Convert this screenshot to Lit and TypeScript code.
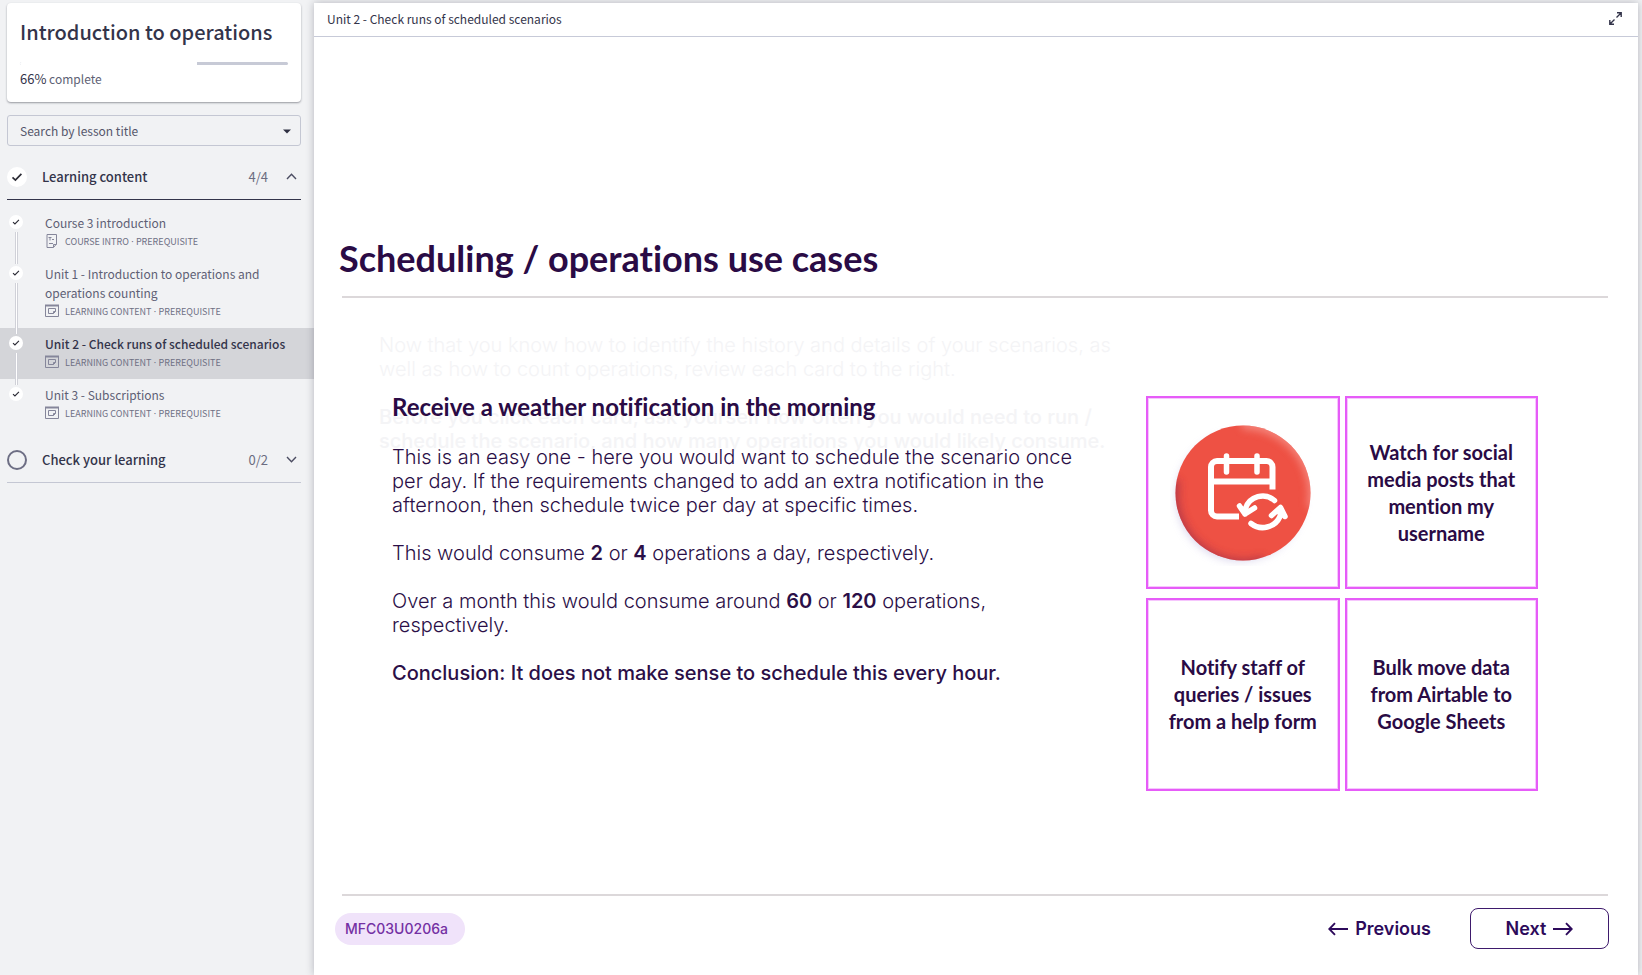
import { LitElement, html, css, svg, nothing } from "lit";
import { customElement, property } from "lit/decorators.js";
import { classMap } from "lit/directives/class-map.js";

interface Lesson {
  title: string;
  kind: string;
  intro?: boolean;
  current?: boolean;
}

const LESSONS: Lesson[] = [
  { title: "Course 3 introduction", kind: "COURSE INTRO", intro: true },
  { title: "Unit 1 - Introduction to operations and operations counting", kind: "LEARNING CONTENT" },
  { title: "Unit 2 - Check runs of scheduled scenarios", kind: "LEARNING CONTENT", current: true },
  { title: "Unit 3 - Subscriptions", kind: "LEARNING CONTENT" },
];

const CARDS = [
  "Watch for social media posts that mention my username",
  "Notify staff of queries / issues from a help form",
  "Bulk move data from Airtable to Google Sheets",
];

const reset = css`
  *, *::before, *::after { box-sizing: border-box; }
  h1, h2, h3, p, ul { margin: 0; padding: 0; font-weight: inherit; font-size: inherit; }
  ul { list-style: none; }
  button, select { font: inherit; color: inherit; margin: 0; cursor: pointer; }
  a { color: inherit; text-decoration: none; }
  svg { display: block; flex: none; }
`;

const check = (size: number) => html`<svg width=${size} height=${size} viewBox="0 0 12 12" fill="none" stroke="#2b2b35" stroke-width="1.7" aria-hidden="true"><path d="M1.5 6.3 4.4 9 10.4 2.9" /></svg>`;

const lessonIcon = (intro: boolean) => html`<svg width="14" height="14" viewBox="0 0 14 14" fill="none" stroke="#85869a" aria-hidden="true">
  ${intro
    ? svg`<path d="M2 .5h9.500v9.500l-3 3.500H2z M8.500 13.200V10.500h3"/><path d="M3.500 3.500h3M5 3.500v3M7 5.500h2M4 9.500h4"/>`
    : svg`<path d="M.5 1.500h13v11H.5z"/><path d="M0 1.500h14" stroke-width="2"/><path d="M3.500 4.500h7v3l-2 2h-5z M8.500 9.500v-2h2"/>`}
</svg>`;

@customElement("course-sidebar")
class CourseSidebar extends LitElement {
  static styles = [reset, css`
    :host {
      display: flex; flex-direction: column; padding-top: 3px;
      font: 12px/19px "Noto Sans CJK SC", "Noto Sans", sans-serif; color: #5e5f74;
    }
    .summary {
      margin: 0 13px 0 7px; padding: 15px 13px 13px 13px; background: #fff; border-radius: 4px;
      box-shadow: 0 1px 2px rgba(40, 42, 55, .45);
    }
    .course { font-size: 20px; line-height: 28px; font-weight: 500; color: #33344a; white-space: nowrap; }
    .bar { height: 3px; margin: 16px 0 4px; border-radius: 2px; background: #c7cad6; overflow: hidden; }
    .fill { height: 100%; background: #fff; }
    .done { line-height: 20px; }
    .percent { font-size: 13px; color: #33344a; }
    .search { position: relative; margin: 13px 13px 0 7px; }
    .search select {
      display: block; width: 100%; height: 31px; padding: 0 12px; appearance: none;
      border: 1px solid #c4c7d3; border-radius: 3px; background: transparent; color: #55566b;
    }
    .caret { position: absolute; right: 10px; top: 14px; pointer-events: none; }
    .section {
      display: flex; align-items: center; height: 46px; margin: 0 13px 0 7px; padding: 0 4px 0 0;
      border: 0; border-bottom: 1px solid #c4c7d3; background: none; color: #33344a;
      font-size: 13px; text-align: left;
    }
    .first { margin-top: 8px; }
    .open { border-bottom-color: #33344a; }
    .mark {
      display: grid; place-items: center; width: 20px; height: 20px; margin-right: 15px;
      border-radius: 50%; background: #fff;
    }
    .empty { background: none; border: 2px solid #6d6e84; }
    .name { flex: 1; font-weight: 500; }
    .count { color: #6b6c80; margin-right: 18px; }
    .lessons { padding: 7px 0; }
    .lesson { display: grid; grid-template-columns: 14px 1fr; column-gap: 22px; padding: 0 20px 0 9px; }
    .current { background: #d4d5d9; }
    .rail { display: flex; flex-direction: column; align-items: center; gap: 3px; padding-top: 8px; margin-bottom: -6px; }
    .dot { display: grid; place-items: center; width: 14px; height: 14px; border-radius: 50%; background: #fff; }
    .line { flex: 1; width: 3px; background: #fff; border: solid #d0d1d8; border-width: 0 1px; z-index: 1; }
    .text { padding: 6px 0 8px; min-width: 0; }
    .current .title { font-weight: 500; color: #33344a; }
    .meta { display: flex; align-items: center; gap: 6px; height: 18px; font-size: 9px; color: #6f7084; }
    .sep { font-family: "Noto Sans", sans-serif; }
  `];

  render() {
    return html`
      <section class="summary">
        <h1 class="course">Introduction to operations</h1>
        <div class="bar" role="progressbar" aria-valuenow="66" aria-label="Course progress">
          <div class="fill" style="width: 66%"></div>
        </div>
        <p class="done"><span class="percent">66%</span> complete</p>
      </section>
      <div class="search">
        <select aria-label="Search by lesson title"><option>Search by lesson title</option></select>
        <svg class="caret" width="8" height="5" viewBox="0 0 8 5" fill="#2f3042" aria-hidden="true"><path d="M0 .5h8L4 4.500z" /></svg>
      </div>
      <button class="section first open" aria-expanded="true">
        <span class="mark">${check(12)}</span>
        <span class="name">Learning content</span>
        <span class="count">4/4</span>
        <svg width="11" height="7" viewBox="0 0 11 7" fill="none" stroke="#4c4d62" stroke-width="1.4" aria-hidden="true"><path d="M1 6 5.500 1.300 10 6" /></svg>
      </button>
      <ul class="lessons">
        ${LESSONS.map((l, i) => html`
          <li>
            <a href="#" class=${classMap({ lesson: true, current: !!l.current })}>
              <span class="rail">
                <span class="dot">${check(8)}</span>
                ${i < LESSONS.length - 1 ? html`<span class="line"></span>` : nothing}
              </span>
              <div class="text">
                <div class="title">${l.title}</div>
                <div class="meta">${lessonIcon(!!l.intro)}<span>${l.kind}<span class="sep"> · </span>PREREQUISITE</span></div>
              </div>
            </a>
          </li>`)}
      </ul>
      <button class="section" aria-expanded="false">
        <span class="mark empty"></span>
        <span class="name">Check your learning</span>
        <span class="count">0/2</span>
        <svg width="11" height="7" viewBox="0 0 11 7" fill="none" stroke="#4c4d62" stroke-width="1.4" aria-hidden="true"><path d="M1 1 5.500 5.700 10 1" /></svg>
      </button>`;
  }
}

@customElement("arrow-icon")
class ArrowIcon extends LitElement {
  @property({ type: Boolean }) back = false;
  static styles = css`:host { display: block; } svg { display: block; }`;
  render() {
    return html`<svg width="20" height="14" viewBox="0 0 20 14" fill="none" stroke="#2d0a5b" stroke-width="1.9" aria-hidden="true">
      <path d=${this.back ? "M20 7H1.500M7 1.200 1.300 7 7 12.800" : "M0 7h18.500M13 1.200 18.700 7 13 12.800"} /></svg>`;
  }
}

@customElement("course-slide")
class CourseSlide extends LitElement {
  static styles = [reset, css`
    :host {
      display: flex; flex-direction: column; flex: 1; padding: 197px 30px 26px 25px;
      font: 300 20px/24px Inter, sans-serif; color: #2b0f47;
    }
    .heading, .answer h3, .card { font-family: Lato, sans-serif; font-weight: 700; font-variant-ligatures: none; color: #2a0b45; }
    .heading { font-size: 36px; line-height: 48px; }
    .rule { flex: none; height: 2px; margin: 0 0 0 3px; border: 0; background: #dcd8da; }
    .heading + .rule { margin-top: 14px; }
    .stage { display: grid; grid-template-columns: minmax(0, 1fr) 392px; column-gap: 27px; flex: 1; padding: 35px 70px 0 40px; }
    .copy { display: grid; align-items: start; }
    .intro, .answer { grid-area: 1 / 1; display: grid; gap: 24px; }
    .intro { color: #f4f4f6; }
    .answer { padding: 60px 40px 0 13px; z-index: 1; }
    .answer h3 { font-size: 24px; line-height: 28px; }
    strong { font-weight: 600; }
    .conclusion, .prompt { font-weight: 500; }
    .cards { display: grid; grid-template-columns: 1fr 1fr; grid-auto-rows: 193px; gap: 9px 5px; align-content: start; padding-top: 63px; }
    .card {
      display: grid; place-items: center; padding: 0 14px; border: 2px solid #e65cf8;
      box-shadow: inset 0 0 0 1px rgba(230, 92, 248, .35);
      background: #fff; font-size: 20px; line-height: 27px; text-align: center;
    }
    footer { display: flex; align-items: center; padding-top: 12px; margin: 0 -1px 0 -4px; }
    .code { margin-right: auto; padding: 4px 17px 4px 10px; border-radius: 16px; background: #f0e3fa; font-size: 14px; font-weight: 500; color: #7430a3; }
    .nav {
      display: flex; align-items: center; justify-content: center; gap: 7px; height: 41px; padding: 0;
      border: 0; background: none; font-size: 18px; font-weight: 600; color: #2d0a5b;
    }
    .next { width: 139px; margin-left: 39px; border: 1px solid #3e1a6c; border-radius: 8px; }
  `];

  render() {
    return html`
      <h2 class="heading">Scheduling / operations use cases</h2>
      <hr class="rule" />
      <div class="stage">
        <div class="copy">
          <div class="intro">
            <p>Now that you know how to identify the history and details of your scenarios, as well as how to count operations, review each card to the right.</p>
            <p class="prompt">Before you click each card, ask yourself how often you would need to run / schedule the scenario, and how many operations you would likely consume.</p>
          </div>
          <div class="answer">
            <h3>Receive a weather notification in the morning</h3>
            <p>This is an easy one - here you would want to schedule the scenario once per day. If the requirements changed to add an extra notification in the afternoon, then schedule twice per day at specific times.</p>
            <p>This would consume <strong>2</strong> or <strong>4</strong> operations a day, respectively.</p>
            <p>Over a month this would consume around <strong>60</strong> or <strong>120</strong> operations, respectively.</p>
            <p class="conclusion">Conclusion: It does not make sense to schedule this every hour.</p>
          </div>
        </div>
        <div class="cards">
          <button class="card" aria-label="Receive a weather notification in the morning">
            <svg width="146" height="146" viewBox="0 0 146 146" fill="none" stroke="#fff" stroke-width="6" aria-hidden="true">
              <defs>
                <filter id="soft" x="-20%" y="-20%" width="140%" height="140%"><feGaussianBlur stdDeviation="4" /></filter>
                <clipPath id="disc"><circle cx="73" cy="73" r="67.500" /></clipPath>
              </defs>
              <circle cx="70" cy="77" r="64" fill="#c9c3e4" stroke="none" filter="url(#soft)" opacity=".7" />
              <circle cx="73" cy="73" r="67.500" fill="#ee5144" stroke="none" />
              <g clip-path="url(#disc)">
                <path d="M4 60A71 71 0 0 0 95 142" stroke="#a8324a" stroke-width="12" filter="url(#soft)" opacity=".8" />
                <path d="M72 4A70 70 0 0 1 142 88" stroke="#f79a92" stroke-width="10" filter="url(#soft)" opacity=".8" />
              </g>
              <path d="M69 96.500H47a6 6 0 0 1-6-6V47a6 6 0 0 1 6-6h49.500a6 6 0 0 1 6 6v22.500M41 61.500h61.500" />
              <path d="M56.500 36v16M87 36v16" stroke-linecap="round" stroke-width="5.500" />
              <path d="M104.500 80.500a18 18 0 0 0-29 8l-.5 5.500M69.500 86l5.500 8 9.500-6M81 103.500a19 19 0 0 0 29-7l1-8M101.500 95.500l9-8 4.500 9" stroke-linecap="round" stroke-linejoin="round" stroke-width="5.500" />
            </svg>
          </button>
          ${CARDS.map((c) => html`<button class="card">${c}</button>`)}
        </div>
      </div>
      <hr class="rule" />
      <footer>
        <span class="code">MFC03U0206a</span>
        <button class="nav"><arrow-icon back></arrow-icon>Previous</button>
        <button class="nav next">Next<arrow-icon></arrow-icon></button>
      </footer>`;
  }
}

@customElement("app-root")
class AppRoot extends LitElement {
  static styles = [reset, css`
    :host { display: grid; grid-template-columns: 314px minmax(0, 1fr); min-height: 100vh; background: #f1f2f4; }
    .panel {
      display: flex; flex-direction: column; margin: 3px 4px 0 0; background: #fff; z-index: 1;
      box-shadow: 0 0 8px rgba(40, 44, 60, .3);
    }
    .top {
      display: flex; align-items: center; justify-content: space-between; height: 34px; padding: 0 16px 3px 13px;
      border-bottom: 1px solid #c7cad8; font: 12px/19px "Noto Sans CJK SC", "Noto Sans", sans-serif; color: #33344a;
    }
    .expand { display: block; padding: 0; border: 0; background: none; }
  `];

  render() {
    return html`
      <course-sidebar></course-sidebar>
      <main class="panel">
        <header class="top">
          <span>Unit 2 - Check runs of scheduled scenarios</span>
          <button class="expand" aria-label="Full screen">
            <svg width="13" height="13" viewBox="0 0 13 13" fill="none" stroke="#33344a" stroke-width="1.400" aria-hidden="true"><path d="M8 .8h4.200V5M12 1 7.500 5.500M.8 8v4.200H5M1 12l4.500-4.500" /></svg>
          </button>
        </header>
        <course-slide></course-slide>
      </main>`;
  }
}
